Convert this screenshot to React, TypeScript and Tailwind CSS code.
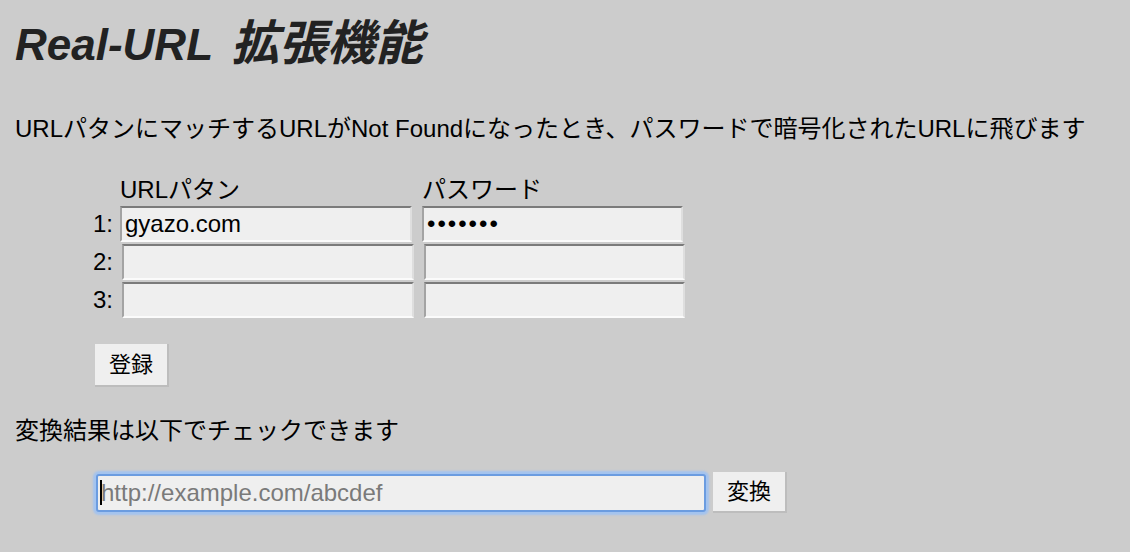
import React from "react";

const inputCls =
  "h-[36px] bg-[#efefef] border-2 border-t-[#7b7b7b] border-l-[#a3a3a3] border-b-[#fbfbfb] border-r-[#dedede] px-[3px] text-[24px] text-black outline-none font-['Liberation_Sans',sans-serif]";

function Row({ n, url, pw, shift }: { n: string; url?: string; pw?: string; shift: boolean }) {
  return (
    <div className="flex items-center h-[36px]">
      <span className={shift ? "w-[29px] shrink-0" : "w-[27px] shrink-0"}>{n}:</span>
      <input className={inputCls + " w-[292px]"} defaultValue={url ?? ""} readOnly />
      <input
        type="password"
        className={inputCls + " w-[261px] ml-[10px] tracking-[2px]"}
        defaultValue={pw ?? ""}
        readOnly
      />
    </div>
  );
}

export default function App() {
  return (
    <div className="min-h-screen w-full bg-[#cccccc] text-black font-['Liberation_Sans','Noto_Sans_CJK_JP',sans-serif] text-[24px] pl-[15px] overflow-hidden">
      <h1 className="pt-[16px] h-[72px] leading-[56px] text-[44px] font-bold italic text-[#222222] whitespace-nowrap">
        Real-URL<span className="ml-[18px] text-[48px]">拡張機能</span>
      </h1>

      <p className="mt-[41px] leading-[32px] whitespace-nowrap">
        URLパタンにマッチするURLがNot Foundになったとき、パスワードで暗号化されたURLに飛びます
      </p>

      <div className="ml-[78px] mt-[29px]">
        <div className="grid grid-cols-[27px_302px_auto] h-[32px] leading-[32px] whitespace-nowrap">
          <span />
          <span>URLパタン</span>
          <span>パスワード</span>
        </div>
        <div className="flex flex-col gap-[2px]">
          <Row n="1" url="gyazo.com" pw="abcdefg" shift={false} />
          <Row n="2" shift={true} />
          <Row n="3" shift={true} />
        </div>
        <button className="mt-[26px] ml-[2px] w-[74px] h-[43px] bg-[#efefef] border-r-2 border-b-2 border-[#bdbdbd] text-[22px] leading-none flex items-center justify-center">
          登録
        </button>
      </div>

      <p className="mt-[28px] leading-[32px] whitespace-nowrap">変換結果は以下でチェックできます</p>

      <div className="mt-[25px] ml-[81px] flex items-center">
        <div className="relative">
          <input
            className="w-[610px] h-[38px] bg-[#efefef] border-2 border-[#6b9ce0] rounded-[3px] shadow-[0_0_2px_3px_#a3c3ef] pl-[3px] text-[24px] outline-none placeholder:text-[#7a7a7a] font-['Liberation_Sans',sans-serif]"
            placeholder="http://example.com/abcdef"
            readOnly
          />
          <span className="absolute left-[4px] top-[6px] w-[2px] h-[25px] bg-black" />
        </div>
        <button className="ml-[7px] w-[74px] h-[41px] bg-[#efefef] border-r-2 border-b-2 border-[#bdbdbd] text-[22px] leading-none flex items-center justify-center">
          変換
        </button>
      </div>
    </div>
  );
}
